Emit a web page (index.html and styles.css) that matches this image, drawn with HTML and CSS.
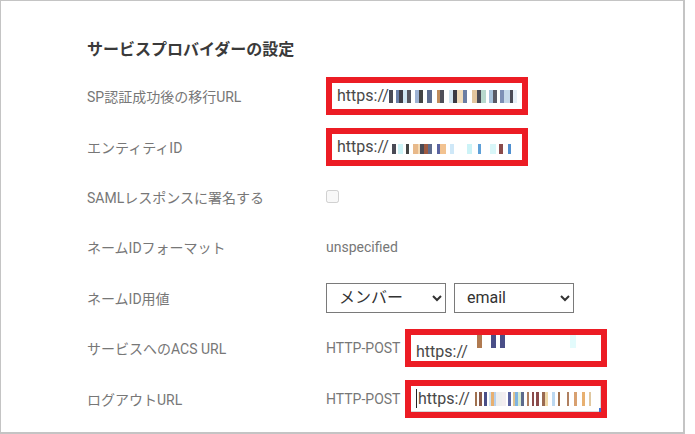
FILE: index.html
```html
<!DOCTYPE html>
<html lang="ja">
<head>
    <meta charset="UTF-8">
    <title>サービスプロバイダーの設定</title>
    <link rel="stylesheet" href="styles.css">
</head>
<body>
    <div class="frame">
        <h2 class="title">サービスプロバイダーの設定</h2>
        <div class="form">
            <div class="row">
                <div class="label">SP認証成功後の移行URL</div>
                <div class="value">
                    <div class="mark"><div class="field">https://<span class="mask m1"></span></div></div>
                </div>
            </div>
            <div class="row">
                <div class="label">エンティティID</div>
                <div class="value">
                    <div class="mark"><div class="field">https://<span class="mask m2"></span></div></div>
                </div>
            </div>
            <div class="row">
                <div class="label">SAMLレスポンスに署名する</div>
                <div class="value"><input type="checkbox" class="check" disabled></div>
            </div>
            <div class="row">
                <div class="label">ネームIDフォーマット</div>
                <div class="value text">unspecified</div>
            </div>
            <div class="row">
                <div class="label">ネームID用値</div>
                <div class="value selects">
                    <select class="pick"><option>メンバー</option></select>
                    <select class="pick"><option>email</option></select>
                </div>
            </div>
            <div class="row">
                <div class="label">サービスへのACS URL</div>
                <div class="value">
                    <span class="method">HTTP-POST</span>
                    <div class="mark"><div class="field">https://<span class="mask m3"></span></div></div>
                </div>
            </div>
            <div class="row">
                <div class="label">ログアウトURL</div>
                <div class="value">
                    <span class="method">HTTP-POST</span>
                    <div class="mark"><div class="field focus"><span class="caret"></span>https://<span class="mask m4"></span></div></div>
                </div>
            </div>
        </div>
    </div>
</body>
</html>
```

FILE: styles.css
```css
* { box-sizing: border-box; margin: 0; padding: 0; }
body {
    background: #fff;
    font-family: Roboto, "Noto Sans CJK JP", sans-serif;
    color: #777;
}
.frame {
    width: 685px; height: 434px;
    border: solid #c4c4c4; border-width: 1px 2px 2px 1px;
    padding: 37px 0 0 86px;
}
.title {
    font-size: 16px; line-height: 24px; font-weight: 700;
    color: #3a3a3a; margin-bottom: 9px;
}
.form { display: grid; grid-auto-rows: 50.4px; }
.row { display: grid; grid-template-columns: 239px 1fr; align-items: center; }
.label { font-size: 14px; color: #777; }
.value { display: flex; align-items: center; }
.text { font-size: 14px; color: #777; }
.method { font-size: 14px; color: #777; width: 79px; }

.mark {
    width: 202px; height: 38px;
    border: 6px solid #ec1c24; background: #fff;
}
.field {
    height: 26px; line-height: 26px; padding-left: 5px;
    font-size: 16px; color: #484848; white-space: nowrap; overflow: hidden;
}
.focus { box-shadow: inset -1px -1px 0 #d8d8d8; position: relative; }
.focus::after {
    content: ''; position: absolute; right: 0; bottom: 0;
    width: 2px; height: 4px; background: #3b6fd0;
}
.caret {
    display: inline-block; width: 1px; height: 19px; background: #222;
    vertical-align: -4px; margin-right: 1px;
}

.mask { display: inline-block; vertical-align: -2px; }
.m1 {
    width: 128px; height: 13px;
    background: linear-gradient(90deg, #4a4a55 0 4px, #fff 4px 7px, #6b7fa8 7px 10px, #3e3e48 10px 14px, #d0e6f4 14px 18px,
        #55555f 18px 22px, #fff 22px 26px, #9fb3d4 26px 30px, #444 30px 34px, #fff 34px 38px, #5d6b8d 38px 43px,
        #fff 43px 48px, #c08c5c 48px 51px, #4f4f59 51px 55px, #fff 55px 60px, #d3e6f3 60px 64px, #3b3b44 64px 68px,
        #f0dcbc 68px 74px, #6a7da3 74px 78px, #fff 78px 83px, #e2c59e 83px 88px, #4a4a55 88px 92px, #b8d8cc 92px 97px,
        #fff 97px 100px, #a9c3dd 100px 104px, #5a5a66 104px 108px, #fff 108px 111px, #7d8fb5 111px 115px,
        #c6d9ea 115px 121px, #4a4a55 121px 124px, #e6eff7 124px 128px);
}
.m2 {
    width: 122px; height: 16px; margin-left: 3px;
    background:
        linear-gradient(#fff 0 6px, transparent 6px) 0 0 / 100% 100% no-repeat,
        linear-gradient(90deg, #4a4a55 0 4px, #fff 4px 6px, #ccf3f7 6px 11px, #fff 11px 14px, #444 14px 17px, #fff 17px 21px,
            #e8b98a 21px 26px, #f4d9b3 26px 28px, #4a4a55 28px 32px, #a05a40 32px 36px, #5d6b8d 36px 40px, #fff 40px 45px,
            #5a63a0 45px 48px, #f2c290 48px 54px, #fff 54px 58px, #cfe8f8 58px 62px, #fff 62px 75px, #ccf3f7 75px 80px,
            #fff 80px 86px, #5ea0d8 86px 89px, #fff 89px 98px, #d8f6f8 98px 104px, #fff 104px 107px, #8a4a4a 107px 111px,
            #fff 111px 116px, #4f8fd0 116px 119px, #fff 119px 122px);
}
.m3 {
    width: 130px; height: 13px; margin-left: 4px; vertical-align: 9px;
    background: linear-gradient(90deg, #fff 0 5px, #b07a50 5px 10px, #fff 10px 19px, #4a4f88 19px 24px, #fff 24px 28px,
        #4a4f88 28px 33px, #fff 33px 98px, #e3fbfc 98px 104px, #fff 104px 130px);
}
.m4 {
    width: 124px; height: 14px; margin-left: 5px;
    background: linear-gradient(90deg, #a0704e 0 2px, #fff 2px 4px, #8a5a4a 4px 7px, #fff 7px 9px, #4a4f88 9px 12px,
        #fff 12px 14px, #cfe2f2 14px 16px, #e8b070 16px 19px, #b7d0ec 19px 21px, #eee 21px 27px, #f3eef0 27px 31px,
        #fff 31px 33px, #5a63a0 33px 36px, #fff 36px 38px, #e0c38f 38px 40px, #7fb4e0 40px 43px, #d8ecd0 43px 46px,
        #5d6b8d 46px 49px, #fff 49px 52px, #b08060 52px 54px, #fff 54px 57px, #8a4a4a 57px 59px, #fff 59px 61px,
        #8a4a4a 61px 64px, #fff 64px 67px, #9a6a50 67px 70px, #f0d8a8 70px 73px, #fff 73px 77px, #bcd8f0 77px 80px,
        #fff 80px 83px, #a0704e 83px 85px, #fff 85px 92px, #b08060 92px 94px, #fff 94px 99px, #d8a070 99px 102px,
        #fff 102px 107px, #e8b070 107px 110px, #fff 110px 114px, #e0c8a0 114px 116px, #fff 116px 124px);
}

.check {
    width: 13px; height: 13px; margin: 0;
}
.selects { gap: 8px; }
.pick {
    width: 120px; height: 30px;
    border: 1px solid #7a7a7a; border-radius: 0; background: #fff;
    font-family: Roboto, "Noto Sans CJK JP", sans-serif;
    font-size: 16px; color: #333; padding-left: 8px;
}
```
